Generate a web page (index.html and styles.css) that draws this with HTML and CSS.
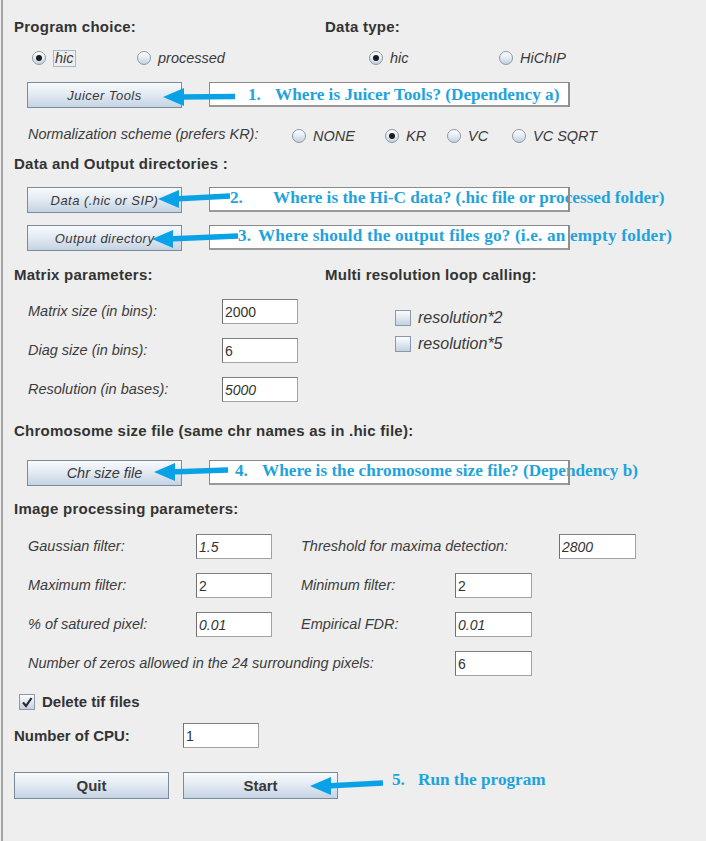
FILE: index.html
```html
<!DOCTYPE html>
<html lang="en">
<head>
<meta charset="utf-8">
<title>SIP</title>
<link rel="stylesheet" href="styles.css">
</head>
<body>
<main class="window">
  <div class="head-row top-heads">
    <h2 class="heading col-left">Program choice:</h2>
    <h2 class="heading">Data type:</h2>
  </div>

  <div class="radio-row">
    <label class="radio-item w-hic"><span class="radio on"></span><span class="rtext focus">hic</span></label>
    <label class="radio-item w-processed"><span class="radio"></span><span class="rtext">processed</span></label>
    <label class="radio-item w-hic2"><span class="radio on"></span><span class="rtext">hic</span></label>
    <label class="radio-item"><span class="radio"></span><span class="rtext">HiChIP</span></label>
  </div>

  <div class="file-row row-juicer">
    <button class="btn">Juicer Tools</button>
    <div class="note note-1"><span class="num num-1">1.</span>Where is Juicer Tools? (Dependency a)</div>
    <svg class="arrow arrow-1" width="72" height="20" viewBox="0 0 72 20"><line x1="16" y1="10" x2="72" y2="9.5" stroke="#0aa2e6" stroke-width="5.5"/><polygon points="0,10 21,1 21,19" fill="#0aa2e6"/></svg>
  </div>

  <div class="norm-row">
    <span class="label norm-label">Normalization scheme (prefers KR):</span>
    <label class="radio-item w-none"><span class="radio"></span><span class="rtext">NONE</span></label>
    <label class="radio-item w-kr"><span class="radio on"></span><span class="rtext">KR</span></label>
    <label class="radio-item w-vc"><span class="radio"></span><span class="rtext">VC</span></label>
    <label class="radio-item"><span class="radio"></span><span class="rtext">VC SQRT</span></label>
  </div>

  <h2 class="heading head-data">Data and Output directories :</h2>

  <div class="file-row row-data">
    <button class="btn">Data (.hic or SIP)</button>
    <div class="note note-2"><span class="num num-2">2.</span>Where is the Hi-C data? (.hic file or processed folder)</div>
    <svg class="arrow arrow-2" width="72" height="20" viewBox="0 0 72 20"><line x1="16" y1="10" x2="72" y2="7" stroke="#0aa2e6" stroke-width="5.5"/><polygon points="0,10 21,1 21,19" fill="#0aa2e6"/></svg>
  </div>

  <div class="file-row row-output">
    <button class="btn">Output directory</button>
    <div class="note note-3"><span class="num num-3">3.</span>Where should the output files go? (i.e. an empty folder)</div>
    <svg class="arrow arrow-3" width="86" height="20" viewBox="0 0 86 20"><line x1="16" y1="10" x2="86" y2="7" stroke="#0aa2e6" stroke-width="5.5"/><polygon points="0,10 21,1 21,19" fill="#0aa2e6"/></svg>
  </div>

  <div class="head-row head-matrix">
    <h2 class="heading col-left">Matrix parameters:</h2>
    <h2 class="heading">Multi resolution loop calling:</h2>
  </div>

  <div class="matrix">
    <div class="fields">
      <div class="field-row"><span class="label lab-matrix">Matrix size (in bins):</span><input class="field" value="2000" readonly></div>
      <div class="field-row"><span class="label lab-matrix">Diag size (in bins):</span><input class="field" value="6" readonly></div>
      <div class="field-row"><span class="label lab-matrix">Resolution (in bases):</span><input class="field it" value="5000" readonly></div>
    </div>
    <div class="multi">
      <label class="check-item"><span class="check"></span><span class="ctext">resolution*2</span></label>
      <label class="check-item"><span class="check"></span><span class="ctext">resolution*5</span></label>
    </div>
  </div>

  <h2 class="heading head-chrom">Chromosome size file (same chr names as in .hic file):</h2>

  <div class="file-row row-chr">
    <button class="btn btn-chr">Chr size file</button>
    <div class="note note-4"><span class="num num-4">4.</span>Where is the chromosome size file? (Dependency b)</div>
    <svg class="arrow arrow-4" width="74" height="20" viewBox="0 0 74 20"><line x1="16" y1="10" x2="74" y2="8" stroke="#0aa2e6" stroke-width="5.5"/><polygon points="0,10 21,1 21,19" fill="#0aa2e6"/></svg>
  </div>

  <h2 class="heading head-image">Image processing parameters:</h2>

  <div class="img-grid">
    <div class="field-row"><span class="label lab-a">Gaussian filter:</span><input class="field it" value="1.5" readonly><span class="label lab-thresh">Threshold for maxima detection:</span><input class="field it wide" value="2800" readonly></div>
    <div class="field-row"><span class="label lab-a">Maximum filter:</span><input class="field" value="2" readonly><span class="label lab-b">Minimum filter:</span><input class="field wide" value="2" readonly></div>
    <div class="field-row"><span class="label lab-a">% of satured pixel:</span><input class="field it" value="0.01" readonly><span class="label lab-b">Empirical FDR:</span><input class="field it wide" value="0.01" readonly></div>
    <div class="field-row"><span class="label lab-zeros">Number of zeros allowed in the 24 surrounding pixels:</span><input class="field wide" value="6" readonly></div>
  </div>

  <label class="delete-row"><span class="check checked"><svg width="14" height="14" viewBox="0 0 14 14"><path d="M3 7.5 L6 11 L11.5 3" fill="none" stroke="#2a2a2a" stroke-width="2.2"/></svg></span><span class="delete-text">Delete tif files</span></label>

  <div class="cpu-row"><span class="cpu-label">Number of CPU:</span><input class="field" value="1" readonly></div>

  <div class="action-row">
    <button class="btn btn-action">Quit</button>
    <button class="btn btn-action">Start</button>
    <div class="note-free"><span class="num num-5">5.</span>Run the program</div>
    <svg class="arrow arrow-5" width="73" height="20" viewBox="0 0 73 20"><line x1="16" y1="10" x2="73" y2="7" stroke="#0aa2e6" stroke-width="5.5"/><polygon points="0,10 21,1 21,19" fill="#0aa2e6"/></svg>
  </div>
</main>
</body>
</html>
```

FILE: styles.css
```css
* { box-sizing: border-box; }
html, body { margin: 0; padding: 0; }
body {
  background: #eeeeee;
  font-family: "Liberation Sans", Arial, sans-serif;
  color: #333333;
  width: 706px;
  height: 841px;
  overflow: hidden;
}
.window {
  display: flex;
  flex-direction: column;
  height: 841px;
  margin-left: 1px;
  border-left: 2px solid #a4a4a4;
  padding-left: 11px;
}

/* headings */
.heading {
  margin: 0;
  font-size: 15px;
  font-weight: bold;
  line-height: 16px;
  color: #333333;
  letter-spacing: 0.25px;
}
.head-row { display: flex; height: 16px; }
.col-left { width: 311px; }
.top-heads { margin-top: 19px; }
.head-data { margin-top: 10px; }
.head-matrix { margin-top: 16px; }
.head-chrom { margin-top: 21px; }
.head-image { margin-top: 15px; }

/* radios */
.radio-row {
  display: flex;
  align-items: center;
  height: 20px;
  margin-top: 13px;
  padding-left: 18px;
}
.radio-item {
  display: flex;
  align-items: center;
  gap: 7px;
}
.w-hic { width: 105px; }
.w-processed { width: 232px; }
.w-hic2 { width: 130px; }
.radio {
  position: relative;
  flex: none;
  width: 14px;
  height: 14px;
  border-radius: 50%;
  border: 1px solid #8c98a6;
  background: linear-gradient(#ffffff 0%, #e6edf4 45%, #c3d1df 100%);
}
.radio.on::after {
  content: "";
  position: absolute;
  left: 3px;
  top: 3px;
  width: 6px;
  height: 6px;
  border-radius: 50%;
  background: #1c1c1c;
}
.rtext {
  font-style: italic;
  font-size: 14.5px;
  line-height: 15px;
  color: #3a3a3a;
}
.rtext.focus {
  border: 1px solid #a7b8c9;
  padding: 0 1px;
}

/* file rows */
.file-row {
  position: relative;
  display: flex;
  align-items: flex-start;
  gap: 27px;
  height: 26px;
  padding-left: 13px;
}
.row-juicer { margin-top: 14px; }
.row-data { margin-top: 15px; }
.row-output { margin-top: 12px; }
.row-chr { margin-top: 21px; }

.btn {
  flex: none;
  width: 155px;
  height: 26px;
  padding: 0;
  border: 1px solid #7b8b9a;
  background: linear-gradient(#f8fafc 0%, #e4ebf3 45%, #c4d3e3 100%);
  font-family: "Liberation Sans", Arial, sans-serif;
  font-style: italic;
  font-size: 13px;
  letter-spacing: 0.45px;
  color: #383838;
}
.btn-chr { font-size: 14.5px; letter-spacing: 0; }

.note {
  position: relative;
  flex: none;
  width: 361px;
  height: 25px;
  background: #ffffff;
  border-top: 1px solid #8a8a8a;
  border-left: 1px solid #8a8a8a;
  border-right: 2px solid #9a9a9a;
  border-bottom: 2px solid #9a9a9a;
  white-space: nowrap;
  font-family: "Liberation Serif", "Times New Roman", serif;
  font-weight: bold;
  font-size: 17.2px;
  line-height: 20px;
  color: #1fa3dc;
}
.note::after {
  content: "";
  position: absolute;
  top: -1px;
  right: -2px;
  width: 2px;
  height: 25px;
  background: #8f8f8f;
}
.num { display: inline-block; }
.note-1 { padding-left: 38px; padding-top: 2px; }
.num-1 { width: 27px; }
.note-2 { padding-left: 20px; }
.num-2 { width: 43px; }
.note-3 { padding-left: 28px; letter-spacing: 0.18px; }
.num-3 { width: 20px; }
.note-4 { padding-left: 25px; }
.num-4 { width: 27px; }

.arrow { position: absolute; }
.arrow-1 { left: 149px; top: 5px; }
.arrow-2 { left: 144px; top: 2px; }
.arrow-3 { left: 138px; top: 4px; }
.arrow-4 { left: 140px; top: 2px; }
.arrow-5 { left: 296px; top: 4px; }

/* normalization */
.norm-row {
  display: flex;
  align-items: center;
  height: 20px;
  margin-top: 18px;
  padding-left: 14px;
}
.label {
  font-style: italic;
  font-size: 14.5px;
  color: #3c3c3c;
  white-space: nowrap;
}
.norm-label {
  width: 264px;
  align-self: flex-start;
  line-height: 16px;
}
.norm-row .rtext { line-height: 16px; }
.w-none { width: 93px; }
.w-kr { width: 62px; }
.w-vc { width: 65px; }

/* matrix */
.matrix {
  display: flex;
  margin-top: 16px;
}
.fields {
  display: flex;
  flex-direction: column;
  gap: 14px;
  padding-left: 14px;
}
.field-row {
  display: flex;
  align-items: center;
  height: 25px;
}
.field-row .label { line-height: 25px; }
.lab-matrix { width: 194px; }
.field {
  flex: none;
  width: 76px;
  height: 25px;
  margin: 0;
  padding: 0 0 0 2px;
  background: #ffffff;
  border: 1px solid #a2a2a2;
  border-top-color: #7f7f7f;
  border-left-color: #707070;
  font-family: "Liberation Sans", Arial, sans-serif;
  font-size: 14px;
  color: #333333;
  outline: none;
}
.field.it { font-style: italic; }
.field.wide { width: 77px; }

.multi {
  display: flex;
  flex-direction: column;
  gap: 10px;
  margin-left: 97px;
  padding-top: 11px;
}
.check-item {
  display: flex;
  align-items: center;
  gap: 7px;
  height: 16px;
}
.check {
  flex: none;
  display: flex;
  align-items: center;
  justify-content: center;
  width: 16px;
  height: 16px;
  border: 1px solid #8c98a6;
  background: linear-gradient(#fafcfe 0%, #e3eaf2 45%, #c3d1df 100%);
}
.ctext {
  font-style: italic;
  font-size: 16px;
  line-height: 16px;
  color: #3a3a3a;
}

/* image processing */
.img-grid {
  display: flex;
  flex-direction: column;
  gap: 14px;
  margin-top: 17px;
  padding-left: 14px;
}
.lab-a { width: 168px; }
.lab-thresh { width: 258px; margin-left: 29px; }
.lab-b { width: 154px; margin-left: 29px; }
.lab-zeros { width: 427px; }

/* delete row */
.delete-row {
  display: flex;
  align-items: center;
  gap: 7px;
  height: 16px;
  margin-top: 18px;
  padding-left: 5px;
}
.delete-text {
  font-size: 15px;
  font-weight: bold;
  line-height: 16px;
  color: #333333;
}

/* cpu */
.cpu-row {
  display: flex;
  align-items: center;
  height: 25px;
  margin-top: 13px;
}
.cpu-label {
  width: 169px;
  font-size: 15px;
  font-weight: bold;
  line-height: 25px;
  color: #333333;
}

/* actions */
.action-row {
  position: relative;
  display: flex;
  align-items: flex-start;
  gap: 14px;
  height: 27px;
  margin-top: 24px;
}
.btn-action {
  height: 27px;
  font-style: normal;
  font-weight: bold;
  font-size: 15px;
  letter-spacing: 0;
}
.note-free {
  margin-left: 40px;
  margin-top: -2px;
  white-space: nowrap;
  font-family: "Liberation Serif", "Times New Roman", serif;
  font-weight: bold;
  font-size: 17.2px;
  line-height: 20px;
  color: #1fa3dc;
}
.num-5 { width: 26px; }
```
